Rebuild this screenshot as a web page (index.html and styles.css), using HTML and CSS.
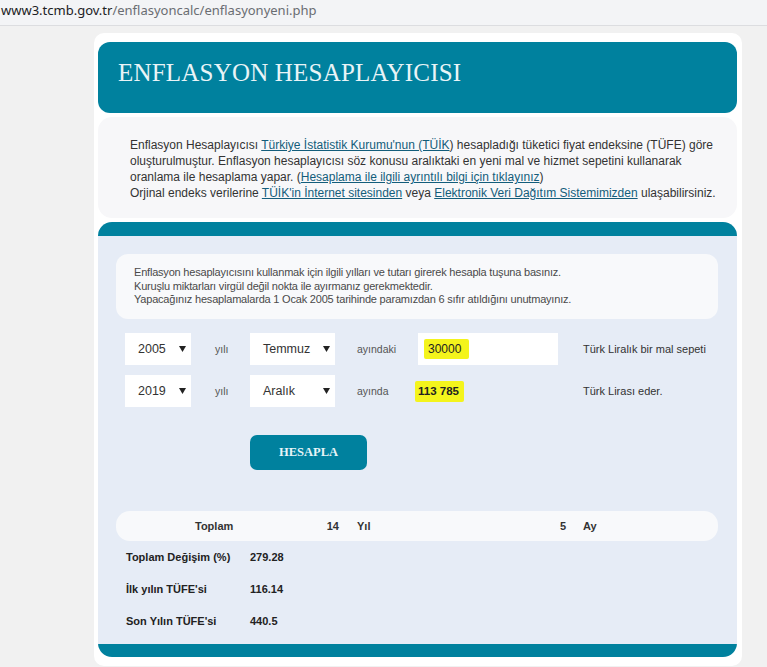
FILE: index.html
```html
<!DOCTYPE html>
<html lang="tr">
<head>
<meta charset="utf-8">
<title>Enflasyon Hesaplayıcısı</title>
<link rel="stylesheet" href="styles.css">
</head>
<body>
<div class="urlbar"><span class="host">www3.tcmb.gov.tr</span><span class="path">/enflasyoncalc/enflasyonyeni.php</span></div>

<main class="card">
  <header class="banner">
    <h1>ENFLASYON HESAPLAYICISI</h1>
  </header>

  <section class="intro">
    <p>Enflasyon Hesaplayıcısı <a href="#">Türkiye İstatistik Kurumu'nun (TÜİK</a>) hesapladığı tüketici fiyat endeksine (TÜFE) göre oluşturulmuştur. Enflasyon hesaplayıcısı söz konusu aralıktaki en yeni mal ve hizmet sepetini kullanarak oranlama ile hesaplama yapar. (<a href="#">Hesaplama ile ilgili ayrıntılı bilgi için tıklayınız</a>)<br>Orjinal endeks verilerine <a href="#">TÜİK'in İnternet sitesinden</a> veya <a href="#">Elektronik Veri Dağıtım Sistemimizden</a> ulaşabilirsiniz.</p>
  </section>

  <section class="calc">
    <div class="calc-body">
      <div class="notice">
        <p>Enflasyon hesaplayıcısını kullanmak için ilgili yılları ve tutarı girerek hesapla tuşuna basınız.<br>Kuruşlu miktarları virgül değil nokta ile ayırmanız gerekmektedir.<br>Yapacağınız hesaplamalarda 1 Ocak 2005 tarihinde paramızdan 6 sıfır atıldığını unutmayınız.</p>
      </div>

      <div class="calc-form">
        <div class="select year"><span>2005</span><svg class="caret" width="7" height="6" viewBox="0 0 7 6"><polygon points="0,0 7,0 3.5,6"/></svg></div>
        <span class="lbl">yılı</span>
        <div class="select month"><span>Temmuz</span><svg class="caret" width="7" height="6" viewBox="0 0 7 6"><polygon points="0,0 7,0 3.5,6"/></svg></div>
        <span class="lbl">ayındaki</span>
        <div class="amount"><span class="mark">30000</span></div>
        <span class="unit">Türk Liralık bir mal sepeti</span>

        <div class="select year"><span>2019</span><svg class="caret" width="7" height="6" viewBox="0 0 7 6"><polygon points="0,0 7,0 3.5,6"/></svg></div>
        <span class="lbl">yılı</span>
        <div class="select month"><span>Aralık</span><svg class="caret" width="7" height="6" viewBox="0 0 7 6"><polygon points="0,0 7,0 3.5,6"/></svg></div>
        <span class="lbl">ayında</span>
        <div class="result"><span class="mark strong">113 785</span></div>
        <span class="unit">Türk Lirası eder.</span>

        <button class="calc-btn" type="button">HESAPLA</button>
      </div>

      <div class="period">
        <span class="p-label">Toplam</span>
        <span class="p-num">14</span>
        <span class="p-unit">Yıl</span>
        <span class="p-num">5</span>
        <span class="p-unit">Ay</span>
      </div>

      <div class="stats">
        <span class="s-label">Toplam Değişim (%)</span><span class="s-val">279.28</span>
        <span class="s-label">İlk yılın TÜFE'si</span><span class="s-val">116.14</span>
        <span class="s-label">Son Yılın TÜFE'si</span><span class="s-val">440.5</span>
      </div>
    </div>
  </section>
</main>
</body>
</html>
```

FILE: styles.css
```css
* { box-sizing: border-box; }

html, body {
  margin: 0;
  padding: 0;
}

body {
  background: #f1f1f1;
  font-family: "Liberation Sans", Arial, sans-serif;
  color: #333;
  overflow: hidden;
  height: 667px;
}

/* address bar strip */
.urlbar {
  height: 26px;
  background: #f3f4f6;
  border-bottom: 1px solid #dcdde0;
  font-family: "Noto Sans", "Open Sans", sans-serif;
  font-size: 13px;
  line-height: 20px;
  padding-left: 1px;
  white-space: nowrap;
}
.urlbar .host { color: #202124; }
.urlbar .path { color: #6a6d72; }

/* main white card */
.card {
  width: 648px;
  margin: 7px 0 0 94px;
  background: #fff;
  border-radius: 10px;
  padding: 9px 5px 9px 4px;
}

.banner {
  height: 71px;
  background: #00819e;
  border-radius: 12px;
  padding: 16px 20px 0;
}
.banner h1 {
  margin: 0;
  font-family: "Liberation Serif", "Times New Roman", serif;
  font-weight: normal;
  font-size: 25px;
  line-height: 30px;
  color: #e9f4f7;
  letter-spacing: 0.2px;
}

.intro {
  margin-top: 4px;
  background: #f7f7f9;
  border-radius: 14px;
  padding: 20px 21px 17px 32px;
}
.intro p {
  margin: 0;
  font-size: 12px;
  line-height: 16px;
  color: #333;
}
.intro a {
  color: #135d7b;
  text-decoration: underline;
}

/* calculator panel with teal rims */
.calc {
  margin-top: 4px;
  background: #00819e;
  border-radius: 14px;
  padding: 14px 0 13px;
}
.calc-body {
  background: #e6ecf6;
  padding: 18px 19px 7px 18px;
}

.notice {
  background: #f8f9fb;
  border-radius: 12px;
  padding: 12px 18px;
  height: 65px;
}
.notice p {
  margin: 0;
  font-size: 11px;
  line-height: 13.5px;
  letter-spacing: -0.2px;
  color: #4a4a4a;
}

.calc-form {
  margin: 14px 0 0 9px;
  display: grid;
  grid-template-columns: 90px 35px 107px 61px 165px 1fr;
  grid-template-rows: 32px 32px auto;
  row-gap: 10px;
  align-items: center;
}

.select {
  height: 32px;
  background: #fff;
  display: flex;
  align-items: center;
  justify-content: space-between;
  padding: 0 5px 0 13px;
  font-size: 12.5px;
  color: #333;
}
.select.year { width: 66px; }
.select.month { width: 85px; }
.caret { fill: #222; }

.lbl {
  font-size: 10.5px;
  color: #555;
}

.amount {
  width: 140px;
  height: 32px;
  background: #fff;
  display: flex;
  align-items: center;
  padding-left: 6px;
}
.mark {
  background: #f4f41c;
  font-size: 12px;
  color: #222;
  padding: 3px 8px 3px 4px;
  border-radius: 2px;
}
.result {
  display: flex;
  align-items: center;
  margin-left: -3px;
}
.mark.strong {
  font-weight: bold;
  font-size: 11.5px;
  padding: 4px 5px 5px 3px;
}

.unit {
  font-size: 11px;
  color: #333;
}

.calc-btn {
  grid-column: 3;
  margin-top: 18px;
  width: 117px;
  height: 35px;
  border: 0;
  border-radius: 7px;
  background: #00819e;
  color: #e8f4f8;
  font-family: "Liberation Serif", "Times New Roman", serif;
  font-weight: bold;
  font-size: 12.5px;
  padding: 0;
}

.period {
  margin-top: 41px;
  height: 30px;
  background: #f8f9fb;
  border-radius: 14px;
  padding-left: 79px;
  display: grid;
  grid-template-columns: 120px 24px 202px 25px auto;
  align-items: center;
  font-size: 11px;
  font-weight: bold;
  color: #333;
}
.p-num { text-align: right; }
.p-unit:nth-of-type(3) { padding-left: 18px; }
.p-unit:last-child { padding-left: 17px; }

.stats {
  margin-left: 9px;
  display: grid;
  grid-template-columns: 125px 1fr;
  grid-auto-rows: 32px;
  align-items: center;
  font-size: 11px;
  font-weight: bold;
  color: #222;
}
.s-label { padding-left: 1px; }
```
